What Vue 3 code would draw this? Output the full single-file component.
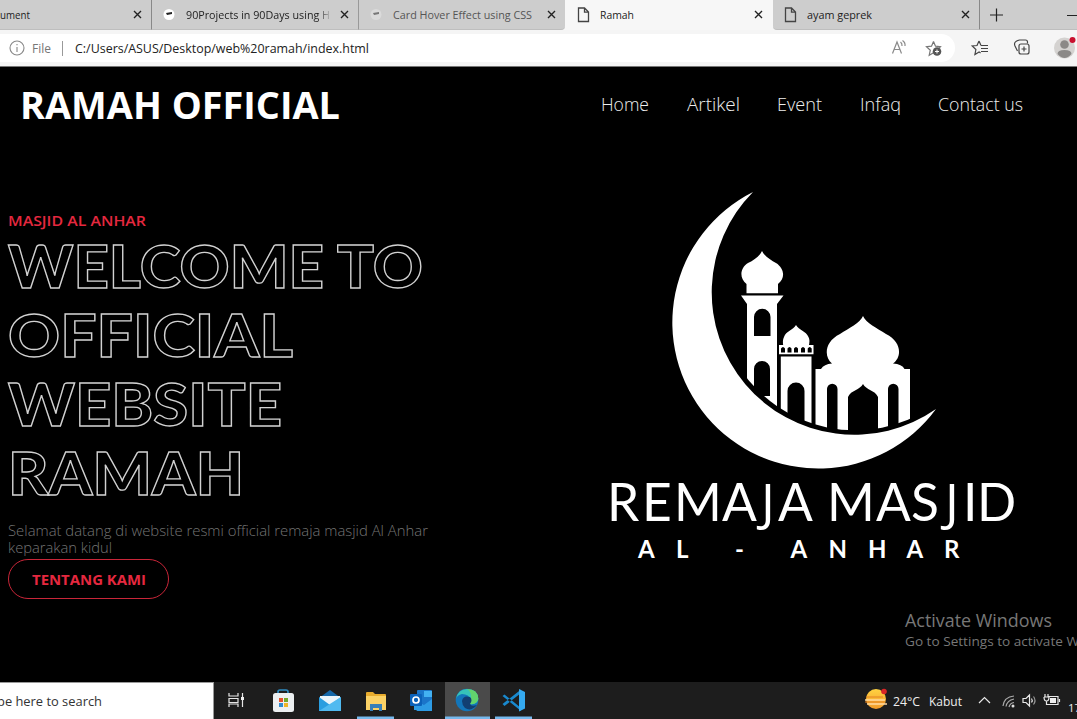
<script setup>
import { h } from 'vue'

// One line of text set to an exact measure.
const Line = (props) =>
  h('svg', { width: props.w + 2, height: props.h, class: 'line' }, [
    h('text', { x: 0, y: props.base, textLength: props.w, lengthAdjust: 'spacingAndGlyphs' }, props.text),
  ])
Line.props = ['text', 'w', 'h', 'base']

const nav = [
  { text: 'Home', w: 48 },
  { text: 'Artikel', w: 53 },
  { text: 'Event', w: 45 },
  { text: 'Infaq', w: 41 },
  { text: 'Contact us', w: 85 },
]
const heading = [
  { text: 'WELCOME TO', w: 415 },
  { text: 'OFFICIAL', w: 285 },
  { text: 'WEBSITE', w: 274 },
  { text: 'RAMAH', w: 236 },
]
const remaja = [
  ['R', 607], ['E', 642], ['M', 674], ['A', 722], ['J', 761], ['A', 778],
  ['M', 827], ['A', 876], ['S', 911], ['J', 945], ['I', 963], ['D', 977],
]
const anhar = [['A', 638], ['L', 676], ['-', 735], ['A', 790.5], ['N', 828.5], ['H', 868], ['A', 906.5], ['R', 944]]
</script>

<template>
  <div class="screen">
    <header class="tabs">
      <div class="tab first">
        <Line text="ument" :w="30" :h="30" :base="19" />
        <svg class="close" width="9" height="9"><path d="M1 1l7 7M8 1l-7 7" /></svg>
      </div>
      <div class="tab">
        <svg class="fav" width="12" height="13"><circle cx="6" cy="6.5" r="5.5" fill="#fff" /><path d="M3 5l6-1v2l-5 1z" fill="#222" /></svg>
        <Line class="fade" text="90Projects in 90Days using H" :w="144" :h="30" :base="19" />
        <svg class="close" width="9" height="9"><path d="M1 1l7 7M8 1l-7 7" /></svg>
      </div>
      <div class="tab dim">
        <svg class="fav" width="12" height="13"><circle cx="6" cy="6.5" r="5.5" fill="#dadada" /><path d="M3 5l6-1v2l-5 1z" fill="#777" /></svg>
        <Line text="Card Hover Effect using CSS" :w="139" :h="30" :base="19" />
        <svg class="close" width="9" height="9"><path d="M1 1l7 7M8 1l-7 7" /></svg>
      </div>
      <div class="tab active">
        <svg class="page" width="13" height="16"><path d="M1.5 1h6l4 4v9.500h-10zM7.500 1v4.200h4" /></svg>
        <Line text="Ramah" :w="34" :h="30" :base="19" />
        <svg class="close" width="9" height="9"><path d="M1 1l7 7M8 1l-7 7" /></svg>
      </div>
      <div class="tab last">
        <svg class="page" width="13" height="16"><path d="M1.5 1h6l4 4v9.500h-10zM7.500 1v4.200h4" /></svg>
        <Line text="ayam geprek" :w="65" :h="30" :base="19" />
        <svg class="close" width="9" height="9"><path d="M1 1l7 7M8 1l-7 7" /></svg>
      </div>
      <svg class="plus" width="97" height="30"><path d="M10 15h13M16.500 8.500v13M87 15.500h10" /></svg>
    </header>

    <div class="toolbar">
      <div class="address">
        <svg class="info" width="16" height="16"><circle cx="8" cy="8" r="7" /><path d="M8 7v5M8 4v1.300" /></svg>
        <Line class="file" text="File" :w="19" :h="28" :base="18.5" />
        <i class="rule"></i>
        <Line class="url" text="C:/Users/ASUS/Desktop/web%20ramah/index.html" :w="294" :h="28" :base="18.5" />
        <svg class="tools" width="60" height="28">
          <g fill="none" stroke="#8a8a8a" stroke-width="1.200">
            <path d="M3.500 19.500l4.500-11.500 4.500 11.500M5.300 15.500h5.500M11.500 8q1.800 1.500 1.500 4M13.500 6.500q3 2 2.500 5.500" />
            <path d="M44.500 7.500l2 4.700 5 .5-3 3M44.500 7.500l-2 4.700-5 .5 3.800 3.500-1.100 5 4.300-2.500" stroke="#777" />
          </g>
          <circle cx="48" cy="17.500" r="4.300" fill="#555" /><path d="M46 17.500h4M48 15.500v4" stroke="#fff" />
        </svg>
      </div>
      <svg class="actions" width="122" height="36">
        <g fill="none" stroke="#444" stroke-width="1.200">
          <path d="M24 11l2 4.500M24 11l-2 4.500-4.800.5 3.700 3.500-1 5 4.200-2.500 1.500 1M26 15.500h7M26 18.500h7M26 21.500h7" />
          <path d="M72.500 13.500v-1.500q0-2-2-2h-6q-6.500 1.500-4.500 6l2.500 5" />
          <rect x="64" y="14" width="10" height="10" rx="2" /><path d="M69 16.500v5M66.500 19h5" />
        </g>
        <circle cx="109.500" cy="18" r="10.500" fill="#d4d2d0" /><circle cx="109.500" cy="14.500" r="4.300" fill="#8b8987" /><path d="M102.500 24q0-4 7-4t7 4q-7 8-14 0" fill="#8b8987" />
        <circle cx="117.500" cy="10" r="3" fill="#c8102e" />
      </svg>
    </div>

    <main>
      <div class="topbar">
        <Line class="brand" text="RAMAH OFFICIAL" :w="320" :h="60" :base="43" />
        <nav>
          <Line v-for="n in nav" :key="n.text" :text="n.text" :w="n.w" :h="40" :base="26" />
        </nav>
      </div>
      <div class="hero">
        <section>
          <Line class="kicker" text="MASJID AL ANHAR" :w="138" :h="22" :base="14.5" />
          <h1><Line v-for="l in heading" :key="l.text" :text="l.text" :w="l.w" :h="69" :base="55" /></h1>
          <div class="copy">
            <Line text="Selamat datang di website resmi official remaja masjid Al Anhar" :w="420" :h="17" :base="13" />
            <Line text="keparakan kidul" :w="104" :h="17" :base="13" />
          </div>
          <button><Line text="TENTANG KAMI" :w="114" :h="37" :base="23.5" /></button>
        </section>

        <svg class="logo" width="420" height="390" viewBox="600 185 420 390">
          <defs><clipPath id="sky"><circle cx="855" cy="292" r="138.300" /></clipPath></defs>
          <path d="M753 192A146 146 0 1 0 936 409A142.500 142.500 0 0 1 753 192Z" />
          <g clip-path="url(#sky)">
            <path d="M762 251C765 257 771 260 776 263C784 268 786 278 778 284V293.300H746.500V284C739 278 740 268 748 263C754 260 759 257 762 251Z" />
            <path fill-rule="evenodd" d="M741 295.500H783.500L777 304V440H747V304ZM754 336H770.500V317A8.250 8.250 0 0 0 754 317ZM754 396H770V369A8 8 0 0 0 754 369Z" />
            <path d="M796 325C799 330 806 331 808.500 337Q810.500 341 808.500 346H783.500Q782 341 784 337C786 331 793 330 796 325Z" />
            <path d="M779 345H813.500V354.300H779Z" />
            <path d="M780.800 356.500H811.500V440H804.500V391A8.500 8.500 0 0 0 787.500 391V440H780.800Z" />
            <path d="M863 316C866 323 877 328 886 334C902 342 902 357 893 363.500Q902 364 904.500 369H910V440H898.500V389A5.250 5.250 0 0 0 888 389V440H878V397C875 390 866 390 863 384C860 390 851 390 848 397V440H837.500V389A5.250 5.250 0 0 0 827 389V440H815.500V369H821Q824 364 832 363.500C824 357 824 342 840 334C849 328 860 323 863 316Z" />
            <path class="hole" d="M781 352.500v-4q2-3 4 0v4zM787.500 352.500v-4q2-3 4 0v4zM794 352.500v-4q2-3 4 0v4zM801 352.500v-4q2-3 4 0v4zM807.700 352.500v-4q2-3 4 0v4z" />
          </g>
          <text class="remaja" y="521"><tspan v-for="(c, i) in remaja" :key="i" :x="c[1]" :class="{ hook: c[0] === 'J' }">{{ c[0] }}</tspan></text>
          <text class="anhar" :x="anhar.map((c) => c[1]).join(' ')" y="557.500">{{ anhar.map((c) => c[0]).join('') }}</text>
        </svg>
      </div>

      <aside>
        <Line class="act" text="Activate Windows" :w="147" :h="24" :base="18.5" />
        <Line class="goto" text="Go to Settings to activate W" :w="174" :h="20" :base="14" />
      </aside>
    </main>

    <footer>
      <div class="search"><Line text="pe here to search" :w="105" :h="37" :base="23" /></div>
      <svg class="dock" width="330" height="37">
        <path d="M232 0h45v37h-45z" fill="#4a4a4a" />
        <g fill="none" stroke="#e6e6e6" stroke-width="1.200"><path d="M16 11v3h9v-3M16 25v-3h9v3M16 16.500h9v4h-9zM29.500 11v14" /></g><path d="M28 15h3v3h-3z" fill="#eee" />
        <path d="M65 14v-4q0-2 2-2h6q2 0 2 2v4" fill="none" stroke="#2e8ac0" stroke-width="1.700" />
        <rect x="60" y="11" width="21" height="19" rx="2.500" fill="#eceff1" />
        <path d="M66 16h4v4h-4z" fill="#e5512c" /><path d="M71 16h4v4h-4z" fill="#73a82c" /><path d="M66 21h4v4h-4z" fill="#318bd0" /><path d="M71 21h4v4h-4z" fill="#efb527" />
        <path d="M106 16l11-8 11 8v3h-22z" fill="#1467a8" /><path d="M107 14h20v12h-20z" fill="#eaf5fb" /><path d="M106 15l11 8 11-8v14h-22z" fill="#2a9ee0" /><path d="M106 29l14-9 8-5v14z" fill="#50baf0" />
        <path d="M153 11q0-1 1-1h6l2 2h10q1 0 1 1v15h-20z" fill="#e8ac2e" /><path d="M153 14h20v14h-20z" fill="#fbd266" /><path d="M157 29v-7h12v7h-3v-3h-6v3z" fill="#377fb7" /><path d="M144 34.500h37v2.500h-37z" fill="#76b9ed" />
        <rect x="204" y="8" width="15" height="20" rx="1" fill="#1b75c9" /><path d="M211 9h8v6h-8z" fill="#43b1f2" /><path d="M201 17l18 11h-18zM219 17v12h-16z" fill="#2d9be4" /><rect x="197" y="12" width="12" height="12" rx="1" fill="#0b62ba" /><circle cx="203" cy="18" r="3" fill="none" stroke="#fff" stroke-width="1.700" />
        <circle cx="254" cy="18" r="11.300" fill="#1376ba" /><path d="M243 17Q245 7 254 7Q265 7 265.300 17Q264 23 257 22Q256 20 258 18Q256 12 249 12Q244 13 243 17" fill="#36c3b9" /><path d="M254 7Q265 7 265.300 17Q264 23 257 22Q256 20 258 18Q259 10 254 7" fill="#62d36d" /><path d="M249 19Q250 13 257 15Q260 18 257 22Q258 25 264 23Q258 30 252 26Q249 23 249 19" fill="#123f72" />
        <path d="M232 34.500h45v2.500h-45zM282 34.500h37v2.500h-37z" fill="#76b9ed" />
        <path d="M289.500 14l2-1.500L308 26v3zM289.500 22l2 2L308 11V7.500z" fill="#1989ce" /><path d="M306 7l6 3v16.500l-6 3z" fill="#35aaf0" />
      </svg>
      <div class="tray">
        <svg width="25" height="30"><defs><linearGradient id="sun" x2="0" y2="1"><stop stop-color="#ffd242" /><stop offset="1" stop-color="#f29b2a" /></linearGradient></defs><circle cx="13" cy="13" r="10" fill="url(#sun)" /><path d="M2 14h20M4 18h20" stroke="#ffd9a0" stroke-width="1.500" /><path d="M2 16h20M3 11h17" stroke="#e48222" /><circle cx="21" cy="5.500" r="2.800" fill="#d92626" /></svg>
        <Line text="24°C" :w="27" :h="37" :base="24" />
        <Line class="weather" text="Kabut" :w="33" :h="37" :base="24" />
        <svg class="status" width="85" height="37">
          <g fill="none" stroke="#e8e8e8" stroke-width="1.200">
            <path d="M1 21l5.500-5.500L12 21" />
            <g stroke="#aaa"><path d="M25 24q1-9 11-10M28 24.500q1-6 8-7.500M31 25q1-4 5-4.500" /></g>
            <path d="M45 16.500h3l3.500-3.500v11L48 20.500h-3zM53.500 16.500q1.500 2 0 4" /><path d="M55.500 14.500q3 4 0 8" stroke="#999" />
            <path d="M70 14.500h10v8h-11M81.500 17v3M67 12v3M70 12v3M66 15h5q0 4-2.500 4-2.500 0-2.500-4M68.500 19v4" />
          </g><path d="M72 16h6v5h-6z" fill="#eee" /><circle cx="35" cy="24" r="1.500" fill="#ddd" />
        </svg>
      </div>
      <Line class="clock" text="17" :w="13" :h="37" :base="30" />
    </footer>
  </div>
</template>

<style>
html, body { margin: 0; overflow: hidden; background: #000; }
</style>
<style scoped>
.screen { width: 1077px; height: 719px; display: flex; flex-direction: column; overflow: hidden; background: #000; font-family: "Open Sans", "Noto Sans", sans-serif; color: #222; }
.line { display: block; flex: none; overflow: visible; fill: currentColor; }
.tabs { display: flex; height: 30px; background: #f7f7f7; font-size: 11px; flex: none; }
.tab { box-sizing: border-box; width: 207px; height: 30px; padding: 0 9px 0 11px; display: flex; align-items: center; background: #cdcdcd; flex: none; border-bottom: 1px solid #bebebe; }
.tab.first { width: 152px; padding-left: 0; border-right: 1px solid #888; }
.tab:nth-child(2) { border-right: 1px solid #999; }
.tab.dim { width: 206px; color: #555; border-bottom-right-radius: 4px; }
.tab.active { width: 208px; padding-left: 12px; padding-right: 10px; background: #f7f7f7; border-color: #f7f7f7; border-radius: 5px 5px 0 0; }
.tab.last { width: 207px; border-right: 1px solid #888; border-bottom-left-radius: 4px; }
.close { margin-left: auto; fill: none; stroke: #222; stroke-width: 1.4; }
.fav { margin-right: 11px; }
.page { margin-right: 10px; fill: none; stroke: #444; stroke-width: 1.3; }
.fade { mask-image: linear-gradient(90deg, #000 90%, transparent); }
.plus { background: #cdcdcd; fill: none; stroke: #222; stroke-width: 1.2; border-bottom: 1px solid #bebebe; box-sizing: border-box; }
.toolbar { display: flex; height: 36px; background: #f5f5f5; border-bottom: 1px solid #777; align-items: center; flex: none; }
.address { width: 955px; height: 28px; background: #fff; border-radius: 0 14px 14px 0; display: flex; align-items: center; font-size: 12.5px; }
.info { margin: 0 7px 0 9px; fill: none; stroke: #888; stroke-width: 1.1; }
.file { color: #777; }
.rule { width: 1px; height: 15px; background: #999; margin: 0 12px 0 9px; }
.tools { margin-left: auto; margin-right: 6px; }
main { height: 615px; position: relative; color: #fff; flex: none; }
.topbar { height: 77px; display: flex; align-items: center; justify-content: space-between; padding: 0 52px 0 20px; }
.brand { font-size: 37px; font-weight: 700; }
nav { display: flex; gap: 35.500px; font-size: 18px; font-weight: 350; color: #eee; margin-top: -2px; }
.hero { display: flex; justify-content: space-between; padding: 0 57px 0 8px; }
section { padding-top: 67px; }
.kicker { color: #e5283f; font-size: 14px; font-weight: 650; }
h1 { margin: 0; font: 900 59px Lato, sans-serif; }
h1 .line { fill: #000; stroke: #d2d2d2; stroke-width: 1.3; }
.copy { margin-top: 14px; font-size: 14.5px; font-weight: 300; color: #747474; height: 36px; }
button { display: block; box-sizing: border-box; height: 40px; width: 161px; border: 1px solid #c92639; border-radius: 20px; background: none; color: #e5283f; padding: 0 0 0 23px; font: 700 14px "Open Sans", sans-serif; }
.logo { fill: #fff; margin-top: 41px; }
.hole { fill: #000; }
.remaja { font: 400 51.5px Lato, sans-serif; }
.hook { font-family: "Open Sans", "Noto Sans", sans-serif; }
.anhar { font: 700 24px Lato, sans-serif; }
aside { position: absolute; left: 905px; top: 541px; color: #777; }
.act { font-size: 18px; }
.goto { font-size: 13.5px; }
footer { height: 37px; background: #1d1d1d; display: flex; color: #eee; font-size: 13px; flex: none; }
.search { box-sizing: border-box; width: 214px; height: 37px; flex: none; background: #fff; color: #333; border-top: 1px solid #999; border-right: 1px solid #999; }
.search .line { margin-left: -3px; }
.dock { margin-left: -1px; flex: none; }
.tray { display: flex; align-items: center; margin-left: 320px; flex: none; }
.tray > .line { margin-left: 5px; }
.tray > .weather { margin-left: 7px; }
.status { margin-left: 14px; flex: none; }
.clock { margin-left: 5px; font-size: 11px; }
</style>
